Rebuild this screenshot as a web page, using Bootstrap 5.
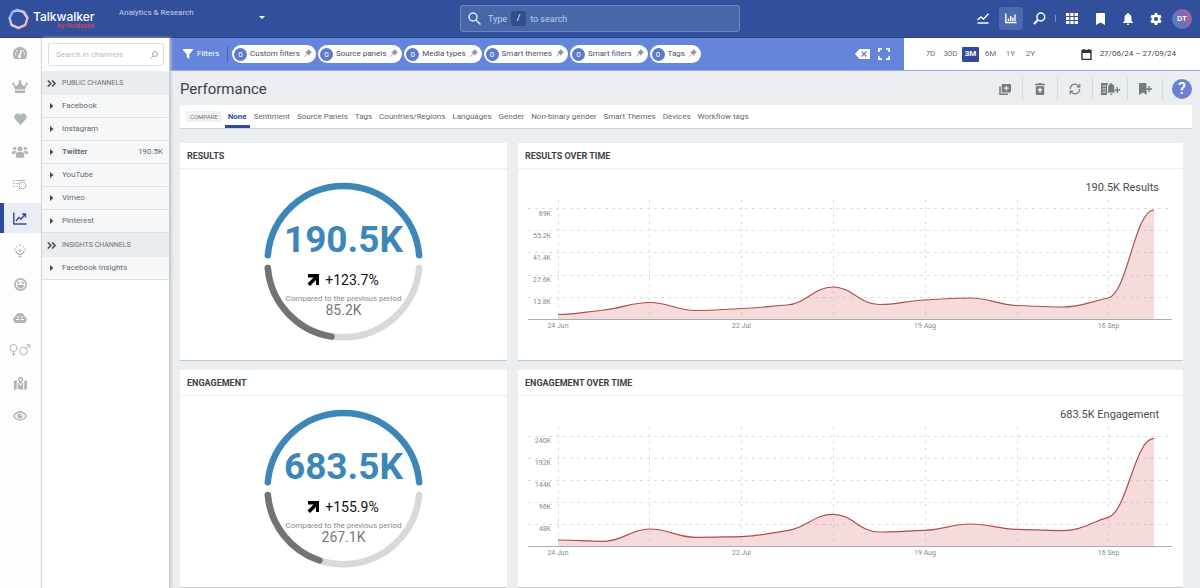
<!DOCTYPE html>
<html lang="en">
<head>
<meta charset="utf-8">
<meta name="viewport" content="width=device-width, initial-scale=1">
<title>Talkwalker – Performance</title>
<link href="https://cdn.jsdelivr.net/npm/bootstrap@5.3.0/dist/css/bootstrap.min.css" rel="stylesheet">
<style>
  body { font-family: Roboto, "Liberation Sans", sans-serif; font-size: 8px; line-height: 12px; color: #5b6369; background: #ebeef0; }
  a { color: inherit; text-decoration: none; }
  svg { display: block; flex: none; }
  .ib { background: none; border: 0; padding: 0; color: inherit; display: flex; align-items: center; justify-content: center; }

  /* top bar */
  .topbar { height: 38px; background: #314f9a; color: #fff; border-bottom: 1px solid #27438c; }
  .side { flex: 1 1 0; min-width: 0; }
  .brand-box { width: 119px; padding-left: 8px; }
  .brand-name { font: 500 12px/13px Inter, sans-serif; color: #fff; }
  .brand-sub { font: 700 6px/5px Inter, sans-serif; color: #c2475f; text-align: right; }
  .project { width: 148px; height: 37px; padding: 0 16px 12px 0; border: 0; appearance: none; font-size: 8px; color: #c3d0f2;
    background: transparent url("data:image/svg+xml,%3Csvg xmlns='http://www.w3.org/2000/svg' width='6' height='3'%3E%3Cpath d='M0 0h6L3 3z' fill='%23fff'/%3E%3C/svg%3E") no-repeat right 2px top 16px; }
  .searchbox { flex: 0 1 280px; height: 27px; background: #4767a8; border: 1px solid #6c87bf; border-radius: 3px; color: #b9cbf0; font-size: 9px; }
  .searchbox svg { margin: 0 7px; }
  .searchbox input { width: 20px; flex: 1; border: 0; background: none; outline: 0; }
  .slash { background: #314e8e; color: #fff; border-radius: 2px; width: 15px; height: 15px; line-height: 15px; text-align: center; font-family: inherit; font-size: 9px; padding: 0; }
  .tool { width: 24px; height: 23px; border-radius: 3px; }
  .tool.on { background: #4c68ae; }
  .tsep { width: 1px; height: 7px; background: #7f95cb; }
  .avatar { width: 20px; height: 20px; margin-right: 8px; border-radius: 50%; background: linear-gradient(60deg, #3f86c4, #7a6cb0 50%, #b8629a); font-size: 8px; font-weight: 500; color: #fff; }

  /* icon rail */
  .rail { width: 42px; flex: none; background: #fdfdfd; gap: 3px; color: #b1b5b5; border-right: 1px solid #d4d6d8; }
  .rail a { height: 30px; display: flex; align-items: center; justify-content: center; padding-right: 1px; }
  .rail a.on { background: #e9eef6; color: #2f4b97; box-shadow: inset 4px 0 #2f4b97; }

  /* channels */
  .channels { width: 128px; flex: none; background: #fff; border-right: 1px solid #c9cccf; box-shadow: 1px 0 3px #bfc3c6; z-index: 1; }
  .chsearch { margin: 5px 5px 5px 6px; height: 23px; border: 1px solid #dcdfe1; border-radius: 2px; padding: 0 5px 0 7px; color: #a4a9ac; }
  .chsearch input { border: 0; outline: 0; width: 100%; padding: 0; font-size: 8px; }
  .chsearch input::placeholder { color: #b9bec1; opacity: 1; }
  .chhead { height: 24px; background: #e9edef; font-size: 7px; color: #6a7276; padding-left: 5px; gap: 6px; }
  .chrow { height: 23px; background: #f6f7f9; border-bottom: 1px solid #dfe2e5; padding: 0 6px 0 8px; gap: 8px; color: #646b70; }
  .chrow svg, .chhead svg { color: #4a5054; }

  /* filter bar */
  .filterbar { height: 33px; background: #6585db; color: #fff; border-bottom: 1px solid #98a8d0; }
  .vsep { width: 1px; height: 16px; background: #4866b8; }
  .pill { height: 18px; border: 0; border-radius: 9px; background: #fff; color: #4a4f55; padding: 0 4px 0 2px; font-size: 8px; display: flex; align-items: center; white-space: nowrap; }
  .pill .num { width: 13px; height: 13px; line-height: 13px; border-radius: 50%; background: #5c7bd0; color: #fff; margin-right: 3px; }
  .pill svg { margin: 0 0 2px 4px; color: #8f969c; }
  .dates { width: 296px; flex: none; background: #fff; color: #6b7074; }
  .range { width: 17px; height: 15px; border-radius: 1px; font-size: 8px; white-space: nowrap; }
  .range.on { background: #2f4b97; color: #fff; font-weight: 700; }

  /* page heading and tabs */
  .title-row { height: 34px; padding: 2px 8px 0 0; color: #6f7d7d; }
  .title-row h1 { font-size: 15px; line-height: 20px; font-weight: 400; color: #3c4347; }
  .act { width: 35px; height: 22px; border-right: 1px solid #d5d9dc; }
  .help { width: 20px; height: 20px; margin-left: 9px; border-radius: 50%; background: #6b80d0; color: #fff; font-size: 16px; font-weight: 500; }
  .tabs { height: 23px; gap: 1px; background: #fff; margin-right: 8px; padding-left: 6px; box-shadow: 0 1px #cfd3d6; color: #61686c; }
  .tabs a { padding: 0 3px; line-height: 23px; height: 23px; white-space: nowrap; }
  .tabs a.on { color: #2f4b97; font-weight: 700; box-shadow: inset 0 -3px #2f4b97; }
  .cmp { background: #f0f1f2; font-size: 6px; line-height: 11px; padding: 0 4px; margin-right: 2px; color: #6f7679; }

  /* panels */
  .panels { padding: 15px 17px 0 0; }
  .panels .row { --bs-gutter-x: 11px; --bs-gutter-y: 10px; }
  .panel { background: #fff; box-shadow: 0 1px #c6c9cb; }
  .panel h2 { font-size: 9px; line-height: 12px; font-weight: 700; color: #3d4246; padding: 7px 7px 6px; margin: 0; border-bottom: 1px solid #eceeef; }
  .panel svg { width: 100%; height: 191px; font-family: Roboto, "Liberation Sans", sans-serif; }
  .big { font-size: 37px; font-weight: 700; fill: #3d87b8; }
  .mid14 { font-size: 14px; }
  .tick7 { font-size: 7px; fill: #85898c; }
  .note8 { font-size: 8px; fill: #85898c; }
  .total { font-size: 11px; fill: #474c50; }
  .gridl { stroke: #dadcdd; stroke-dasharray: 3 4; fill: none; }
</style>
</head>
<body>
<header class="topbar d-flex align-items-center">
  <div class="side d-flex align-items-center">
    <a href="#" class="brand-box d-flex align-items-center gap-1">
      <svg width="21" height="22" viewBox="0 0 21 22" fill="none"><defs><linearGradient id="lg" x1="0" y1="0" x2="1" y2="1"><stop offset="0" stop-color="#6fb1ee"/><stop offset=".5" stop-color="#c9c3e6"/><stop offset="1" stop-color="#f2906f"/></linearGradient></defs><path d="M9 2l7 2 3.500 6-2 7-7 3-7-3-2-7 3-6z" stroke="url(#lg)" stroke-width="2.500" stroke-linejoin="round"/><path d="M5 3l9 .5 5 7M2 10l1.500 7 7 2.500M9 20l8-3 2-7" stroke="#e9e3f5" stroke-width="1" opacity=".7"/></svg>
      <span class="d-flex flex-column"><span class="brand-name">Talkwalker</span><span class="brand-sub">by Hootsuite</span></span>
    </a>
    <select class="project" aria-label="Project"><option>Analytics &amp; Research</option></select>
  </div>
  <label class="searchbox d-flex align-items-center">
    <svg width="13" height="13" viewBox="0 0 13 13" fill="none" stroke="#dfe8fb" stroke-width="1.500"><circle cx="5" cy="5" r="4"/><path d="M8 8l4.500 4.500"/></svg>
    <span>Type</span><kbd class="slash mx-1">/</kbd><span>to search</span>
    <input type="text" aria-label="Search">
  </label>
  <div class="side d-flex align-items-center justify-content-end gap-1">
    <button class="ib tool" aria-label="Trends"><svg width="12" height="11" viewBox="0 0 12 11" fill="none" stroke="#fff" stroke-width="1.400"><path d="M.5 7l3.500-3 2.500 2L11.500.8M.5 10h11"/></svg></button>
    <button class="ib tool on" aria-label="Analytics"><svg width="12" height="11" viewBox="0 0 12 11" fill="none" stroke="#fff" stroke-width="1.400"><path d="M.8.5v9h10.700M3.500 8V5.500M5.700 8V3M7.800 8V4.500M10 8V1.500"/></svg></button>
    <button class="ib tool" aria-label="Quick search"><svg width="13" height="13" viewBox="0 0 13 13" fill="none" stroke="#fff"><circle cx="7.800" cy="5" r="3.900" stroke-width="1.500"/><path d="M4.800 8L1 12" stroke-width="2"/></svg></button>
    <span class="tsep"></span>
    <button class="ib tool" aria-label="Apps"><svg width="12" height="11" viewBox="0 0 12 11" fill="#fff"><path d="M0 0h3.300v3H0zM4.300 0h3.300v3H4.300zM8.600 0H12v3H8.600zM0 4h3.300v3H0zM4.300 4h3.300v3H4.300zM8.600 4H12v3H8.600zM0 8h3.300v3H0zM4.300 8h3.300v3H4.300zM8.600 8H12v3H8.600z"/></svg></button>
    <button class="ib tool" aria-label="Bookmarks"><svg width="9" height="12" viewBox="0 0 9 12" fill="#fff"><path d="M0 1q0-1 1-1h7q1 0 1 1v11L4.500 9.500 0 12z"/></svg></button>
    <button class="ib tool" aria-label="Alerts"><svg width="10" height="12" viewBox="0 0 10 12" fill="#fff"><path d="M5 0q1 0 1 1 2.500.8 2.500 3.500V8L10 9.500v.5H0v-.5L1.500 8V4.500Q1.500 1.800 4 1q0-1 1-1zM3.800 10.700h2.400Q6.200 12 5 12t-1.200-1.300z"/></svg></button>
    <button class="ib tool" aria-label="Settings"><svg width="12" height="12" viewBox="0 0 16 16" fill="#fff"><path fill-rule="evenodd" d="M6.300 0h3.400l.5 2.300 1.300.8 2.300-.8 1.700 3-1.800 1.600v2.200l1.800 1.600-1.700 3-2.300-.8-1.300.8-.5 2.300H6.300l-.5-2.300-1.300-.8-2.300.8-1.700-3 1.800-1.600V6.900L.5 5.300l1.700-3 2.300.8 1.300-.8zM8 5.200a2.800 2.800 0 100 5.600 2.800 2.800 0 000-5.600z"/></svg></button>
    <button class="ib avatar">DT</button>
  </div>
</header>

<div class="d-flex" style="min-height:calc(100vh - 38px)">
  <nav class="rail d-flex flex-column" aria-label="Sections">
    <a href="#" aria-label="Dashboard"><svg width="14" height="12" viewBox="0 0 14 12"><path d="M7 0a7 7 0 00-6.300 10.500Q1 12 2 12h10q1 0 1.300-1.500A7 7 0 007 0z" fill="currentColor"/><path d="M6.500 9L8.500 3" stroke="#fff" stroke-width="1.300"/><g fill="#fff"><circle cx="6.600" cy="9.300" r="1.500"/><circle cx="2.500" cy="7" r=".8"/><circle cx="3.800" cy="3.700" r=".8"/><circle cx="10.500" cy="4" r=".8"/><circle cx="11.600" cy="7" r=".8"/></g></svg></a>
    <a href="#" aria-label="Top content"><svg width="16" height="13" viewBox="0 0 16 13" fill="currentColor"><path d="M3 9.500L1 4l3.800 2L8 1l3.200 5L15 4l-2 5.500zM3 10.500h10V13H3z"/><circle cx="8" cy="1.200" r="1.200"/><circle cx="1.200" cy="3.800" r="1.200"/><circle cx="14.800" cy="3.800" r="1.200"/></svg></a>
    <a href="#" aria-label="Favourites"><svg width="13" height="12" viewBox="0 0 13 12" fill="#a9b9b3"><path d="M6.500 12L1.200 6.300C-2 2.500 3.500-2 6.500 2c3-4 8.500.5 5.300 4.300z"/></svg></a>
    <a href="#" aria-label="Audience"><svg width="16" height="12" viewBox="0 0 16 12" fill="currentColor"><circle cx="8" cy="3" r="2.500"/><circle cx="2.700" cy="2.500" r="1.700"/><circle cx="13.300" cy="2.500" r="1.700"/><path d="M3.800 11V8.500q0-2.500 2.500-2.500h3.400q2.500 0 2.500 2.500V11q0 .8-1 .8H4.800q-1 0-1-.8zM0 8V6.500Q0 5 1.500 5h2q.7 0 1.200.5Q3 6.500 3 8zM16 8V6.500Q16 5 14.500 5h-2q-.7 0-1.200.5Q13 6.500 13 8z"/></svg></a>
    <a href="#" aria-label="Results list"><svg width="14" height="12" viewBox="0 0 14 12" fill="none" stroke="currentColor"><path d="M0 1.500h2M3.500 1.500H12M0 4.500h2M3.500 4.500H6M0 7.500h2M3.500 7.500H5M4.500 11.500L7 9"/><circle cx="9.500" cy="6.500" r="3.300"/></svg></a>
    <a href="#" class="on" aria-label="Performance"><svg width="14" height="13" viewBox="0 0 14 13" fill="none" stroke="currentColor" stroke-width="1.400"><path d="M.8.500v11.500h12.700M3 9l3-3.500 2 1.500 4-4.500M9 2h3.500v3.500"/></svg></a>
    <a href="#" aria-label="Insights"><svg width="12" height="14" viewBox="0 0 12 14" fill="none" stroke="currentColor"><path d="M6 0v2.500M2 1.500l1.300 2M10 1.500L8.700 3.500M0 5l2 .8M12 5l-2 .8"/><path d="M2 7q.3 2.500 2.700 3.300h2.600Q9.700 9.500 10 7M4.500 12.500h3" stroke-width="1.600"/><circle cx="6" cy="6.500" r="1.200"/></svg></a>
    <a href="#" aria-label="Sentiment"><svg width="13" height="13" viewBox="0 0 13 13"><circle cx="6.500" cy="6.500" r="5.600" fill="none" stroke="currentColor" stroke-width="1.700"/><circle cx="4.300" cy="4.700" r="1.200" fill="currentColor"/><circle cx="8.700" cy="4.700" r="1.200" fill="currentColor"/><path d="M3 7h7q-.5 3.500-3.500 3.500T3 7z" fill="currentColor"/></svg></a>
    <a href="#" aria-label="Clouds"><svg width="16" height="11" viewBox="0 0 16 11"><path d="M3.500 11a3.500 3.500 0 01-.3-6.500 5 5 0 019.500 0A3.500 3.500 0 0112.500 11z" fill="currentColor"/><path d="M5 5h2.500M9 5h2M4 7.500h3M8.500 7.500H12" stroke="#fff"/></svg></a>
    <a href="#" aria-label="Demographics"><svg width="22" height="12" viewBox="0 0 22 12" fill="none" stroke="currentColor"><circle cx="4.500" cy="4" r="3.500"/><path d="M4.500 7.500V12M2.500 10h4M17 4.500L20.500 1M17.500.8h3.300V4"/><circle cx="14.500" cy="7" r="3.800"/></svg></a>
    <a href="#" aria-label="Map"><svg width="13" height="13" viewBox="0 0 13 13" fill="currentColor"><path d="M0 4l2.800-1v9L0 13zM3.800 5L6.500 9 9.200 5v8l-5.400-1zM10.200 4L13 3v9l-2.800 1z"/><path fill-rule="evenodd" d="M6.500 0a2.600 2.600 0 012.600 2.700C9.100 4 6.500 7.500 6.500 7.500S3.900 4 3.900 2.700A2.600 2.600 0 016.500 0zm0 1.500a1.200 1.200 0 100 2.400 1.200 1.200 0 000-2.400z"/></svg></a>
    <a href="#" aria-label="Visibility"><svg width="14" height="10" viewBox="0 0 14 10"><path d="M.8 5Q3 1 7 1t6.200 4Q11 9 7 9T.8 5z" fill="none" stroke="currentColor" stroke-width="1.500"/><circle cx="7" cy="5" r="2.600" fill="currentColor"/><circle cx="8" cy="4" r=".8" fill="#fff"/></svg></a>
  </nav>

  <aside class="channels">
    <label class="chsearch d-flex align-items-center">
      <input type="text" placeholder="Search in channels" aria-label="Search in channels">
      <svg width="8" height="8" viewBox="0 0 8 8" fill="none" stroke="currentColor"><circle cx="5" cy="3" r="2.500"/><path d="M3 5L.5 7.500"/></svg>
    </label>
    <div class="chhead d-flex align-items-center"><svg width="9" height="7" viewBox="0 0 9 7" fill="none" stroke="currentColor" stroke-width="1.600"><path d="M.8.5l3 3-3 3M5 .5l3 3-3 3"/></svg>PUBLIC CHANNELS</div>
    <a href="#" class="chrow d-flex align-items-center"><svg width="4" height="6" viewBox="0 0 4 6" fill="currentColor"><path d="M0 0l3.500 3L0 6z"/></svg>Facebook</a>
    <a href="#" class="chrow d-flex align-items-center"><svg width="4" height="6" viewBox="0 0 4 6" fill="currentColor"><path d="M0 0l3.500 3L0 6z"/></svg>Instagram</a>
    <a href="#" class="chrow d-flex align-items-center"><svg width="4" height="6" viewBox="0 0 4 6" fill="currentColor"><path d="M0 0l3.500 3L0 6z"/></svg><b>Twitter</b><span class="ms-auto">190.5K</span></a>
    <a href="#" class="chrow d-flex align-items-center"><svg width="4" height="6" viewBox="0 0 4 6" fill="currentColor"><path d="M0 0l3.500 3L0 6z"/></svg>YouTube</a>
    <a href="#" class="chrow d-flex align-items-center"><svg width="4" height="6" viewBox="0 0 4 6" fill="currentColor"><path d="M0 0l3.500 3L0 6z"/></svg>Vimeo</a>
    <a href="#" class="chrow d-flex align-items-center"><svg width="4" height="6" viewBox="0 0 4 6" fill="currentColor"><path d="M0 0l3.500 3L0 6z"/></svg>Pinterest</a>
    <div class="chhead d-flex align-items-center"><svg width="9" height="7" viewBox="0 0 9 7" fill="none" stroke="currentColor" stroke-width="1.600"><path d="M.8.5l3 3-3 3M5 .5l3 3-3 3"/></svg>INSIGHTS CHANNELS</div>
    <a href="#" class="chrow d-flex align-items-center"><svg width="4" height="6" viewBox="0 0 4 6" fill="currentColor"><path d="M0 0l3.500 3L0 6z"/></svg>Facebook Insights</a>
  </aside>

  <main class="flex-grow-1" style="min-width:0">
    <div class="filterbar d-flex">
      <div class="d-flex align-items-center flex-grow-1" style="padding:0 14px 0 13px">
        <svg width="10" height="10" viewBox="0 0 10 10" fill="#fff"><path d="M0 0h10v1L6.300 5.200V10L3.700 8V5.200L0 1z"/></svg>
        <span class="ms-1">Filters</span><span class="vsep ms-2 me-1"></span>
        <div class="d-flex" style="gap:2px">
          <button class="pill"><span class="num">0</span>Custom filters<svg width="8" height="8"><use href="#pin"/></svg></button>
          <button class="pill"><span class="num">0</span>Source panels<svg width="8" height="8"><use href="#pin"/></svg></button>
          <button class="pill"><span class="num">0</span>Media types<svg width="8" height="8"><use href="#pin"/></svg></button>
          <button class="pill"><span class="num">0</span>Smart themes<svg width="8" height="8"><use href="#pin"/></svg></button>
          <button class="pill"><span class="num">0</span>Smart filters<svg width="8" height="8"><use href="#pin"/></svg></button>
          <button class="pill"><span class="num">0</span>Tags<svg width="8" height="8"><use href="#pin"/></svg></button>
        </div>
        <button class="ib ms-auto me-2" aria-label="Clear filters"><svg width="15" height="10" viewBox="0 0 15 10"><path d="M4.500 0H14q1 0 1 1v8q0 1-1 1H4.500L0 5z" fill="#fff"/><path d="M6.500 2.500l5 5M11.500 2.500l-5 5" stroke="#6585db" stroke-width="1.400"/></svg></button>
        <button class="ib" aria-label="Full screen"><svg width="12" height="12" viewBox="0 0 12 12" fill="none" stroke="#fff" stroke-width="1.700"><path d="M.8 4V.8H4M8 .8h3.200V4M11.200 8v3.200H8M4 11.200H.8V8"/></svg></button>
      </div>
      <div class="dates d-flex align-items-center">
        <div class="d-flex" style="gap:3px;padding-left:18px">
          <button class="ib range">7D</button><button class="ib range">30D</button><button class="ib range on">3M</button><button class="ib range">6M</button><button class="ib range">1Y</button><button class="ib range">2Y</button>
        </div>
        <button class="ib ms-auto gap-2" style="margin-right:24px;font-size:8px;color:#3f4448"><svg width="11" height="11" viewBox="0 0 11 11"><path d="M1 1.500h9v9H1z" fill="none" stroke="#333" stroke-width="1.400"/><path d="M1 1.500h9V4H1zM2.300 0h1.400v2H2.300zM7.300 0h1.400v2H7.300z" fill="#333"/></svg>27/06/24 – 27/09/24</button>
      </div>
    </div>

    <div style="padding-left:10px">
      <div class="title-row d-flex align-items-center">
        <h1 class="mb-0 me-auto">Performance</h1>
        <button class="ib act" aria-label="Add to collection"><svg width="12" height="11" viewBox="0 0 12 11"><path d="M1 2.500V10.200h8" fill="none" stroke="currentColor" stroke-width="1.500"/><rect x="2.700" width="9.300" height="8.500" rx="1" fill="currentColor"/><path d="M7.300 1.700v5M4.800 4.200h5" stroke="#ebeef0" stroke-width="1.200"/></svg></button>
        <button class="ib act" aria-label="Restore"><svg width="10" height="12" viewBox="0 0 10 12"><path d="M0 .8h3L3.600 0h2.800L7 .8h3v1.500H0zM.8 3.300h8.400V11q0 1-1 1H1.800q-1 0-1-1z" fill="currentColor"/><path d="M5 10V6M3 7.500l2-2 2 2" fill="none" stroke="#ebeef0" stroke-width="1.200"/></svg></button>
        <button class="ib act" aria-label="Refresh"><svg width="12" height="12" viewBox="0 0 12 12" fill="none" stroke="currentColor" stroke-width="1.200"><path d="M1.300 6A4.700 4.700 0 0110 3.500M10.700 6A4.700 4.700 0 012 8.500M10.800.8v3H7.700M1.200 11.200v-3h3.100"/></svg></button>
        <button class="ib act" aria-label="Create alert"><svg width="19" height="12" viewBox="0 0 19 12"><path d="M0 0h7L6 3v9H0z" fill="currentColor"/><path d="M1.500 3H5M1.500 6H5M1.500 9H5" stroke="#ebeef0"/><path d="M10 0q1 0 1.200 1 2 .7 2 3v4l1.200 1.500H6L7.200 8V4q0-2.300 2-3Q9.200 0 10 0zM9 10.500h2.500Q11 12 10.200 12T9 10.500z" fill="currentColor"/><path d="M16.300 4v6M13.600 7H19" stroke="currentColor" stroke-width="1.300"/></svg></button>
        <button class="ib act" aria-label="Add bookmark"><svg width="13" height="12" viewBox="0 0 13 12"><path d="M0 1q0-1 1-1h6.500Q7 1 7.500 2v7.500L8 12 4 9.500 0 12z" fill="currentColor"/><path d="M10 3v6M7 6h6" stroke="currentColor" stroke-width="1.400"/></svg></button>
        <button class="ib help" aria-label="Help">?</button>
      </div>
      <nav class="tabs d-flex align-items-center" aria-label="Compare by">
        <span class="cmp">COMPARE</span>
        <a href="#" class="on">None</a><a href="#">Sentiment</a><a href="#">Source Panels</a><a href="#">Tags</a><a href="#">Countries/Regions</a><a href="#">Languages</a><a href="#">Gender</a><a href="#">Non-binary gender</a><a href="#">Smart Themes</a><a href="#">Devices</a><a href="#">Workflow tags</a>
      </nav>

      <div class="panels"><div class="row g-panels" style="margin-top:-10px">
        <div class="col-4"><section class="panel"><h2>RESULTS</h2>
          <svg viewBox="0 0 327 191" text-anchor="middle">
            <g fill="none" stroke-width="6.500" stroke-linecap="round"><path d="M87.800 86.300A76 76 0 01239.200 86.300" stroke="#3d87b8"/><path d="M87.800 98.900A76 76 0 00239.200 98.900" stroke="#d9d9d9"/><path d="M87.800 98.900A76 76 0 00151.500 167.600" stroke="#737373"/></g>
            <text class="big" x="163.500" y="83">190.5K</text>
            <path d="M128 105h11v11h-3v-5l-6 6-2.500-2.500 6-6H128z"/>
            <text class="mid14" x="172" y="115.500" fill="#111">+123.7%</text>
            <text class="note8" x="163.500" y="132">Compared to the previous period</text>
            <text class="mid14" x="163.500" y="146" fill="#777">85.2K</text>
          </svg></section></div>
        <div class="col-8"><section class="panel"><h2>RESULTS OVER TIME</h2>
          <svg viewBox="0 0 665 191">
            <text class="total" x="641" y="22" text-anchor="end">190.5K Results</text>
            <path class="gridl" d="M10 39.500H652M10 61.500H652M10 83.500H652M10 106.500H652M10 128.500H652M40.500 31V150M131.500 31V150M223.500 31V150M315.500 31V150M407.500 31V150M499.500 31V150M590.500 31V150"/>
            <path class="area" data-y="145.500,141,133.500,141.500,139.500,136,118,135.500,131,129,136.500,138,129,41"/>
            <path d="M10 150.500H654" stroke="#a9acae"/>
            <g class="tick7" text-anchor="end"><text x="33" y="47">69K</text><text x="33" y="69">55.2K</text><text x="33" y="91">41.4K</text><text x="33" y="113">27.6K</text><text x="33" y="135">13.8K</text></g>
            <g class="tick7" text-anchor="middle"><text x="40" y="159">24 Jun</text><text x="223.500" y="159">22 Jul</text><text x="407" y="159">19 Aug</text><text x="590.500" y="159">16 Sep</text></g>
          </svg></section></div>
        <div class="col-4"><section class="panel"><h2>ENGAGEMENT</h2>
          <svg viewBox="0 0 327 191" text-anchor="middle">
            <g fill="none" stroke-width="6.500" stroke-linecap="round"><path d="M87.800 86.300A76 76 0 01239.200 86.300" stroke="#3d87b8"/><path d="M87.800 98.900A76 76 0 00239.200 98.900" stroke="#d9d9d9"/><path d="M87.800 98.900A76 76 0 00139.500 164.500" stroke="#737373"/></g>
            <text class="big" x="163.500" y="83">683.5K</text>
            <path d="M128 105h11v11h-3v-5l-6 6-2.500-2.500 6-6H128z"/>
            <text class="mid14" x="172" y="115.500" fill="#111">+155.9%</text>
            <text class="note8" x="163.500" y="132">Compared to the previous period</text>
            <text class="mid14" x="163.500" y="146" fill="#777">267.1K</text>
          </svg></section></div>
        <div class="col-8"><section class="panel"><h2>ENGAGEMENT OVER TIME</h2>
          <svg viewBox="0 0 665 191">
            <text class="total" x="641" y="22" text-anchor="end">683.5K Engagement</text>
            <path class="gridl" d="M10 40.500H652M10 62.500H652M10 84.500H652M10 106.500H652M10 128.500H652M40.500 31V150M131.500 31V150M223.500 31V150M315.500 31V150M407.500 31V150M499.500 31V150M590.500 31V150"/>
            <path class="area" data-y="144,145.300,133,141.300,140.600,134.600,118.300,136,134.300,128,133.300,134.600,121.300,42.300"/>
            <path d="M10 150.500H654" stroke="#a9acae"/>
            <g class="tick7" text-anchor="end"><text x="33" y="47">240K</text><text x="33" y="69">192K</text><text x="33" y="91">144K</text><text x="33" y="113">96K</text><text x="33" y="135">48K</text></g>
            <g class="tick7" text-anchor="middle"><text x="40" y="159">24 Jun</text><text x="223.500" y="159">22 Jul</text><text x="407" y="159">19 Aug</text><text x="590.500" y="159">16 Sep</text></g>
          </svg></section></div>
      </div></div>
    </div>
  </main>
</div>

<svg width="0" height="0" style="position:absolute" aria-hidden="true"><symbol id="pin" viewBox="0 0 8 8"><path d="M4.500 0L8 3.500l-1 .3-1.500 1.500-.2 1.700L1 2.700l1.700-.2L4.200 1z" fill="currentColor"/><path d="M3 5L.3 7.700" stroke="currentColor" stroke-width=".8"/></symbol></svg>

<script src="https://cdn.jsdelivr.net/npm/bootstrap@5.3.0/dist/js/bootstrap.bundle.min.js"></script>
<script>
  // Smooth weekly area curves: flat at peaks and valleys, never overshooting a data point
  document.querySelectorAll('.area').forEach(function (el) {
    var y = el.dataset.y.split(',').map(Number), h = 596 / 13, k = 0.42, n = y.length, d = [], m = [];
    for (var i = 0; i < n - 1; i++) d.push(y[i + 1] - y[i]);
    for (i = 0; i < n; i++) {
      var a = d[i - 1], b = d[i];
      m.push(a === undefined || b === undefined || a * b <= 0 ? 0
        : Math.sign(a) * Math.min(Math.abs(a), Math.abs(b)));
    }
    var p = 'M40 ' + y[0];
    for (i = 0; i < n - 1; i++) {
      var x = 40 + i * h;
      p += 'C' + [x + h * k, y[i] + m[i] * k, x + h * (1 - k), y[i + 1] - m[i + 1] * k, x + h, y[i + 1]].map(function (v) { return v.toFixed(1); }).join(' ');
    }
    el.setAttribute('d', p);
    el.setAttribute('fill', 'none');
    el.setAttribute('stroke', '#b04e4c');
    el.setAttribute('stroke-width', '1.2');
    var f = el.cloneNode();
    f.setAttribute('d', p + 'V150.5H40Z');
    f.setAttribute('stroke', 'none');
    f.setAttribute('fill', '#e79d9d');
    f.setAttribute('fill-opacity', '.37');
    el.parentNode.insertBefore(f, el);
  });
</script>
</body>
</html>
